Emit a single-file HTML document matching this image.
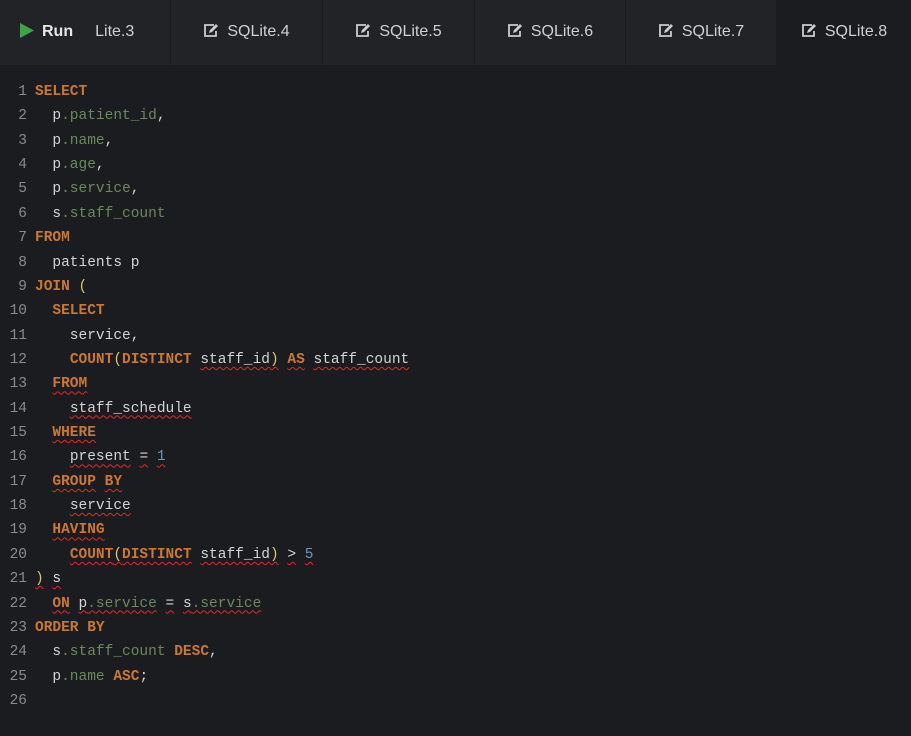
<!DOCTYPE html>
<html><head><meta charset="utf-8"><style>
html,body{margin:0;padding:0;background:#1b1c20;width:911px;height:736px;overflow:hidden}
.bar{position:absolute;left:0;top:0;width:911px;height:65px;background:#222327;font-family:"Liberation Sans",sans-serif;font-size:16px;color:#d0d0d0}
.tab{position:absolute;top:0;height:65px;line-height:64px;border-right:1px solid #1a1b1e;text-align:center}
.act{background:#1b1c20}
.run{position:absolute;left:20px;top:0;line-height:64px;font-weight:bold;color:#e6e6e6}
.run svg{vertical-align:-2px;margin-right:8px}
.ic{display:inline-block;vertical-align:-2px;margin-right:8px}
.code{position:absolute;top:80px;left:0;font-family:"Liberation Mono",monospace;font-size:14.5px;color:#d4d4d4}
.l{height:24.36px;line-height:24.36px;white-space:pre;position:relative}
.n{display:inline-block;width:27px;text-align:right;color:#8b8b8b;margin-right:8px}
.k{color:#cc7832;font-weight:bold}
.c{color:#6a8a5c}
.m{color:#6897bb}
.p{color:#d9c66b}
.e{text-decoration:underline wavy #e02a2a;text-decoration-thickness:1px;text-underline-offset:3px}
</style></head><body>
<div class="bar">
<div class="tab" style="left:0;width:170px"></div>
<div class="run"><svg width="14" height="15" viewBox="0 0 14 15"><path d="M0 0L14 7.5L0 15Z" fill="#3fa14a"/></svg>Run<span style="font-weight:normal;margin-left:22px;color:#d0d0d0">Lite.3</span></div>
<div class="tab" style="left:171px;width:151px"><svg class="ic" width="16" height="15" viewBox="0 0 16 15"><path d="M11 2H2v11h11V8" fill="none" stroke="#ccc" stroke-width="1.8"/><path d="M6 10l1-3 6-6 2 2-6 6z" fill="#ccc"/></svg>SQLite.4</div>
<div class="tab" style="left:323px;width:151px"><svg class="ic" width="16" height="15" viewBox="0 0 16 15"><path d="M11 2H2v11h11V8" fill="none" stroke="#ccc" stroke-width="1.8"/><path d="M6 10l1-3 6-6 2 2-6 6z" fill="#ccc"/></svg>SQLite.5</div>
<div class="tab" style="left:475px;width:150px"><svg class="ic" width="16" height="15" viewBox="0 0 16 15"><path d="M11 2H2v11h11V8" fill="none" stroke="#ccc" stroke-width="1.8"/><path d="M6 10l1-3 6-6 2 2-6 6z" fill="#ccc"/></svg>SQLite.6</div>
<div class="tab" style="left:626px;width:150px"><svg class="ic" width="16" height="15" viewBox="0 0 16 15"><path d="M11 2H2v11h11V8" fill="none" stroke="#ccc" stroke-width="1.8"/><path d="M6 10l1-3 6-6 2 2-6 6z" fill="#ccc"/></svg>SQLite.7</div>
<div class="tab act" style="left:777px;width:134px;border:none"><svg class="ic" width="16" height="15" viewBox="0 0 16 15"><path d="M11 2H2v11h11V8" fill="none" stroke="#ccc" stroke-width="1.8"/><path d="M6 10l1-3 6-6 2 2-6 6z" fill="#ccc"/></svg>SQLite.8</div>
</div>
<div class="code">
<div class="l"><span class="n">1</span><span class="k">SELECT</span></div>
<div class="l"><span class="n">2</span>  p<span class="c">.patient_id</span>,</div>
<div class="l"><span class="n">3</span>  p<span class="c">.name</span>,</div>
<div class="l"><span class="n">4</span>  p<span class="c">.age</span>,</div>
<div class="l"><span class="n">5</span>  p<span class="c">.service</span>,</div>
<div class="l"><span class="n">6</span>  s<span class="c">.staff_count</span></div>
<div class="l"><span class="n">7</span><span class="k">FROM</span></div>
<div class="l"><span class="n">8</span>  patients p</div>
<div class="l"><span class="n">9</span><span class="k">JOIN</span> <span class="p">(</span></div>
<div class="l"><span class="n">10</span>  <span class="k">SELECT</span></div>
<div class="l"><span class="n">11</span>    service,</div>
<div class="l"><span class="n">12</span>    <span class="k">COUNT</span><span class="p">(</span><span class="k">DISTINCT</span> <span class="e">staff_id</span><span class="p e">)</span> <span class="k e">AS</span> <span class="e">staff_count</span></div>
<div class="l"><span class="n">13</span>  <span class="k e">FROM</span></div>
<div class="l"><span class="n">14</span>    <span class="e">staff_schedule</span></div>
<div class="l"><span class="n">15</span>  <span class="k e">WHERE</span></div>
<div class="l"><span class="n">16</span>    <span class="e">present</span> <span class="e">=</span> <span class="m e">1</span></div>
<div class="l"><span class="n">17</span>  <span class="k e">GROUP</span> <span class="k e">BY</span></div>
<div class="l"><span class="n">18</span>    <span class="e">service</span></div>
<div class="l"><span class="n">19</span>  <span class="k e">HAVING</span></div>
<div class="l"><span class="n">20</span>    <span class="k e">COUNT</span><span class="p e">(</span><span class="k e">DISTINCT</span> <span class="e">staff_id</span><span class="p e">)</span> <span class="e">&gt;</span> <span class="m e">5</span></div>
<div class="l"><span class="n">21</span><span class="p e">)</span> <span class="e">s</span></div>
<div class="l"><span class="n">22</span>  <span class="k e">ON</span> <span class="e">p<span class="c">.service</span></span> <span class="e">=</span> <span class="e">s<span class="c">.service</span></span></div>
<div class="l"><span class="n">23</span><span class="k">ORDER</span> <span class="k">BY</span></div>
<div class="l"><span class="n">24</span>  s<span class="c">.staff_count</span> <span class="k">DESC</span>,</div>
<div class="l"><span class="n">25</span>  p<span class="c">.name</span> <span class="k">ASC</span>;</div>
<div class="l"><span class="n">26</span></div>
</div>
</body></html>
